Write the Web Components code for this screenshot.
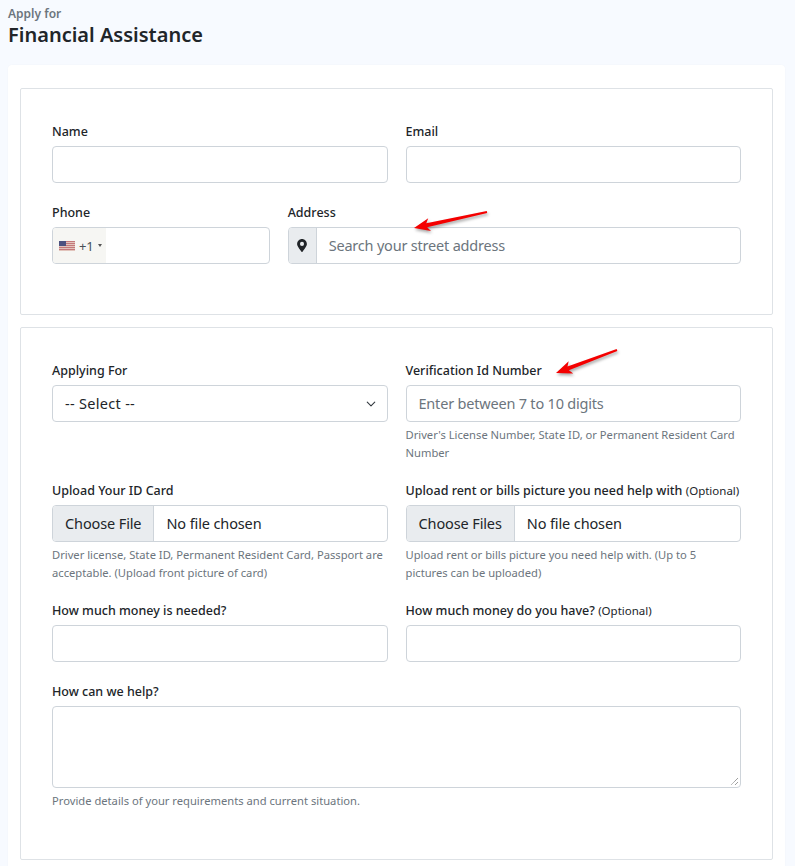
<!DOCTYPE html>
<html lang="en">
<head>
<meta charset="utf-8">
<title>Apply for Financial Assistance</title>
<style>
  html, body { margin: 0; background: #f7faff; }
  body { font-family: "Noto Sans", "Open Sans", sans-serif; color: #212529; height: 866px; overflow: hidden; }
</style>
</head>
<body>
<apply-page>
  <span slot="kicker">Apply for</span>
  <span slot="title">Financial Assistance</span>

  <form-panel>
    <form-field span="6" label="Name"><text-box></text-box></form-field>
    <form-field span="6" label="Email"><text-box></text-box></form-field>
    <form-field span="4" label="Phone"><phone-box></phone-box></form-field>
    <form-field span="8" label="Address"><address-box placeholder="Search your street address"></address-box></form-field>
    <red-arrow style="left:393px;top:122px" x1="73" y1="1" x2="0" y2="17"></red-arrow>
  </form-panel>

  <form-panel>
    <form-field span="6" label="Applying For"><select-box value="-- Select --"></select-box></form-field>
    <form-field span="6" label="Verification Id Number" help="Driver's License Number, State ID, or Permanent Resident Card Number"><text-box placeholder="Enter between 7 to 10 digits"></text-box></form-field>
    <form-field span="6" label="Upload Your ID Card" help="Driver license, State ID, Permanent Resident Card, Passport are acceptable. (Upload front picture of card)"><file-box button="Choose File"></file-box></form-field>
    <form-field span="6" label="Upload rent or bills picture you need help with" optional help="Upload rent or bills picture you need help with. (Up to 5 pictures can be uploaded)"><file-box button="Choose Files"></file-box></form-field>
    <form-field span="6" label="How much money is needed?"><text-box></text-box></form-field>
    <form-field span="6" label="How much money do you have?" optional><text-box></text-box></form-field>
    <form-field span="12" label="How can we help?" help="Provide details of your requirements and current situation."><text-area></text-area></form-field>
    <red-arrow style="left:535px;top:21px" x1="61" y1="1" x2="0" y2="24"></red-arrow>
  </form-panel>
</apply-page>

<script>
// shared look of every control box
const BOX = `
  .box { box-sizing:border-box; height:37px; display:flex; align-items:center; background:#fff;
         border:1px solid #ced4da; border-radius:4px; font-size:14.5px; letter-spacing:-.12px; overflow:hidden; }
  .ph { color:#6c757d; padding:0 0 2px 12px; letter-spacing:-.2px; }
`;

class ApplyPage extends HTMLElement {
  connectedCallback() {
    this.attachShadow({ mode: 'open' }).innerHTML = `
      <style>
        :host { display:block; padding:0 10px 0 8px; }
        header { height:65px; box-sizing:border-box; padding-top:6px; }
        .kicker { display:block; font-size:12px; font-weight:600; color:#6c757d; line-height:15px; }
        .title { display:block; font-size:20px; font-weight:600; line-height:28px; color:#212529; }
        .card { background:#fff; border-radius:4px; padding:23px 12px 12px; display:flex; flex-direction:column; gap:12px;
                box-shadow:0 0 2px rgba(0,0,0,.03); }
      </style>
      <header>
        <span class="kicker"><slot name="kicker"></slot></span>
        <span class="title"><slot name="title"></slot></span>
      </header>
      <div class="card"><slot></slot></div>`;
  }
}

class FormPanel extends HTMLElement {
  connectedCallback() {
    this.attachShadow({ mode: 'open' }).innerHTML = `
      <style>
        :host { display:block; position:relative; border:1px solid #dee2e6; border-radius:2px; padding:32px 31px 31px 31px; }
        .grid { display:grid; grid-template-columns:repeat(12, 1fr); column-gap:18px; }
      </style>
      <div class="grid"><slot></slot></div>`;
  }
}

class FormField extends HTMLElement {
  connectedCallback() {
    const help = this.getAttribute('help');
    const opt = this.hasAttribute('optional') ? ' <span class="opt">(Optional)</span>' : '';
    this.style.gridColumn = 'span ' + this.getAttribute('span');
    this.attachShadow({ mode: 'open' }).innerHTML = `
      <style>
        :host { display:block; padding-bottom:19px; min-width:0; }
        label { display:block; font-size:12.5px; font-weight:500; line-height:20px; padding-top:1px; margin-bottom:4px; white-space:nowrap; }
        .opt { font-size:11.5px; font-weight:400; }
        .help { font-size:11.2px; line-height:18px; color:#6c757d; margin:4px 0 -1px; }
      </style>
      <label>${this.getAttribute('label')}${opt}</label>
      <slot></slot>
      ${help ? `<div class="help">${help}</div>` : ''}`;
  }
}

class TextBox extends HTMLElement {
  connectedCallback() {
    const ph = this.getAttribute('placeholder') || '';
    this.attachShadow({ mode: 'open' }).innerHTML = `
      <style>:host { display:block; } ${BOX}</style>
      <div class="box"><span class="ph">${ph}</span></div>`;
  }
}

class PhoneBox extends HTMLElement {
  connectedCallback() {
    this.attachShadow({ mode: 'open' }).innerHTML = `
      <style>
        :host { display:block; } ${BOX}
        .dial { height:100%; width:53px; background:#f6f6f3 radial-gradient(#ecede7 .5px, transparent .7px) 0 0/4px 4px;
                display:flex; align-items:center; padding-left:6px; box-sizing:border-box; }
        svg { margin-top:1px; }
        .code { font-size:13px; margin-left:4px; color:#495057; padding-top:1px; }
        .caret { width:0; height:0; border:2.5px solid transparent; border-top:3px solid #555; border-bottom:0; margin-left:4px; }
      </style>
      <div class="box">
        <div class="dial">
          <svg width="16" height="10" viewBox="0 0 16 10">
            <rect width="16" height="10" fill="#e2c4bc"/>
            <path d="M0 .5h16M0 2.5h16M0 4.5h16M0 6.5h16M0 8.5h16" stroke="#c4787a" stroke-width="1"/>
            <rect width="7" height="5" fill="#4d5280"/>
          </svg>
          <span class="code">+1</span><span class="caret"></span>
        </div>
      </div>`;
  }
}

class AddressBox extends HTMLElement {
  connectedCallback() {
    this.attachShadow({ mode: 'open' }).innerHTML = `
      <style>
        :host { display:block; } ${BOX}
        .pin { width:27px; height:100%; flex:none; display:flex; align-items:center; justify-content:center;
               background:#e9ecef; border-right:1px solid #ced4da; }
      </style>
      <div class="box">
        <span class="pin">
          <svg width="10" height="13" viewBox="0 0 384 512"><path fill="#212529" d="M172 502C27 291 0 263 0 192 0 86 86 0 192 0s192 86 192 192c0 71-27 99-172 310-10 14-30 14-40 0zM192 272a80 80 0 1 0 0-160 80 80 0 0 0 0 160z"/></svg>
        </span>
        <span class="ph">${this.getAttribute('placeholder')}</span>
      </div>`;
  }
}

class SelectBox extends HTMLElement {
  connectedCallback() {
    this.attachShadow({ mode: 'open' }).innerHTML = `
      <style>
        :host { display:block; } ${BOX}
        .box { justify-content:space-between; padding:0 11px 0 12px; letter-spacing:.3px; }
        span { padding-bottom:2px; }
      </style>
      <div class="box">
        <span>${this.getAttribute('value')}</span>
        <svg width="10" height="10" viewBox="0 0 16 16"><path fill="none" stroke="#343a40" stroke-linecap="round" stroke-linejoin="round" stroke-width="1.8" d="M2 5l6 6 6-6"/></svg>
      </div>`;
  }
}

class FileBox extends HTMLElement {
  connectedCallback() {
    this.attachShadow({ mode: 'open' }).innerHTML = `
      <style>
        :host { display:block; } ${BOX}
        .btn { height:100%; box-sizing:border-box; display:flex; align-items:center; padding:0 12px 2px; background:#e9ecef; border-right:1px solid #ced4da; }
        .name { padding:0 0 2px 12px; }
      </style>
      <div class="box"><span class="btn">${this.getAttribute('button')}</span><span class="name">No file chosen</span></div>`;
  }
}

class TextArea extends HTMLElement {
  connectedCallback() {
    this.attachShadow({ mode: 'open' }).innerHTML = `
      <style>
        :host { display:block; position:relative; height:82px; box-sizing:border-box; border:1px solid #ced4da; border-radius:4px; background:#fff; }
        svg { position:absolute; right:1px; bottom:1px; }
      </style>
      <svg width="9" height="9" viewBox="0 0 9 9"><path d="M8 1L1 8M8 5L5 8" stroke="#777" stroke-width="1" stroke-dasharray="1 .6"/></svg>`;
  }
}

// annotation arrow drawn on top of the screenshot, tail (x1,y1) to tip (x2,y2)
class RedArrow extends HTMLElement {
  connectedCallback() {
    const [x1, y1, x2, y2] = ['x1', 'y1', 'x2', 'y2'].map(k => +this.getAttribute(k));
    const a = Math.atan2(y1 - y2, x1 - x2);
    const len = Math.hypot(x1 - x2, y1 - y2);
    const p = (d, s) => `${x2 + Math.cos(a) * d - Math.sin(a) * s},${y2 + Math.sin(a) * d + Math.cos(a) * s}`;
    const w = Math.abs(x1 - x2) + 8, h = Math.abs(y1 - y2) + 10;
    this.attachShadow({ mode: 'open' }).innerHTML = `
      <style>
        :host { position:absolute; display:block; pointer-events:none; }
        svg { display:block; overflow:visible; filter:drop-shadow(1px 2px 1.5px rgba(0,0,0,.35)); }
      </style>
      <svg width="${w}" height="${h}">
        <polygon fill="#f40000" points="${p(0, 0)} ${p(16, -6.5)} ${p(13, -2)} ${p(len, -1)} ${p(len, 1)} ${p(13, 2)} ${p(16, 6.5)}"/>
      </svg>`;
  }
}

customElements.define('apply-page', ApplyPage);
customElements.define('form-panel', FormPanel);
customElements.define('form-field', FormField);
customElements.define('text-box', TextBox);
customElements.define('phone-box', PhoneBox);
customElements.define('address-box', AddressBox);
customElements.define('select-box', SelectBox);
customElements.define('file-box', FileBox);
customElements.define('text-area', TextArea);
customElements.define('red-arrow', RedArrow);
</script>
</body>
</html>
